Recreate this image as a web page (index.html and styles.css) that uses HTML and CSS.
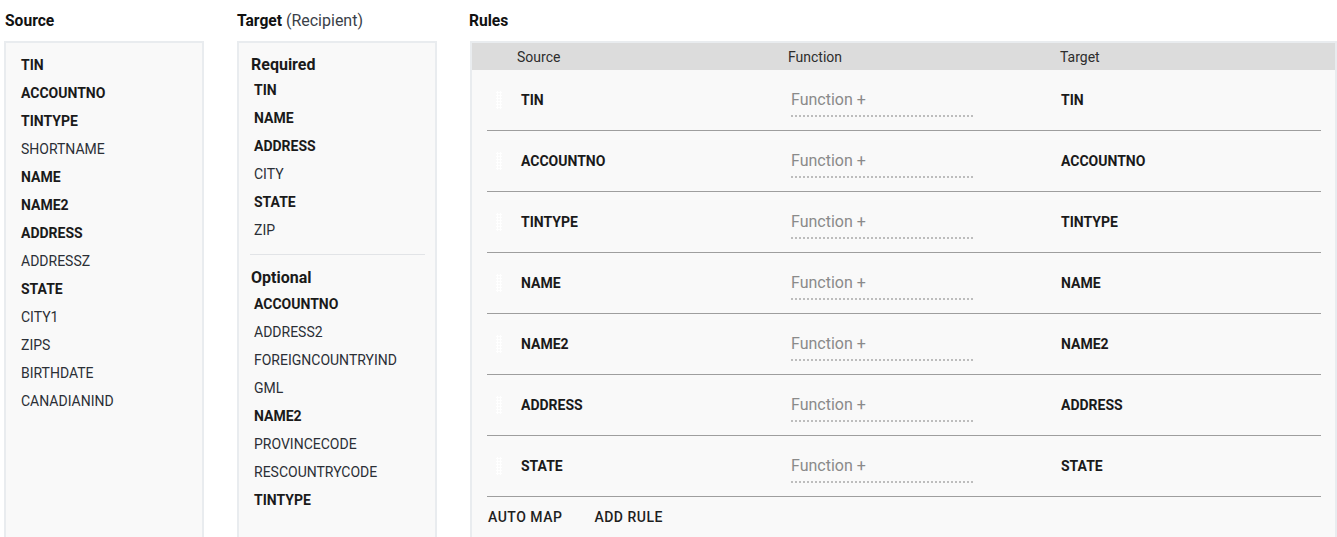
FILE: index.html
```html
<!DOCTYPE html>
<html lang="en">
<head>
<meta charset="utf-8">
<title>Mapping</title>
<link rel="stylesheet" href="styles.css">
</head>
<body>
<div class="page">
  <section class="col col-source">
    <h2 class="col-title">Source</h2>
    <div class="panel list-panel">
      <ul class="fields">
        <li class="b">TIN</li>
        <li class="b">ACCOUNTNO</li>
        <li class="b">TINTYPE</li>
        <li>SHORTNAME</li>
        <li class="b">NAME</li>
        <li class="b">NAME2</li>
        <li class="b">ADDRESS</li>
        <li>ADDRESSZ</li>
        <li class="b">STATE</li>
        <li>CITY1</li>
        <li>ZIPS</li>
        <li>BIRTHDATE</li>
        <li>CANADIANIND</li>
      </ul>
    </div>
  </section>

  <section class="col col-target">
    <h2 class="col-title">Target <span class="sub">(Recipient)</span></h2>
    <div class="panel target-panel">
      <h3 class="group-title">Required</h3>
      <ul class="fields fields-target">
        <li class="b">TIN</li>
        <li class="b">NAME</li>
        <li class="b">ADDRESS</li>
        <li>CITY</li>
        <li class="b">STATE</li>
        <li>ZIP</li>
      </ul>
      <hr class="group-sep">
      <h3 class="group-title group-title-2">Optional</h3>
      <ul class="fields fields-target">
        <li class="b">ACCOUNTNO</li>
        <li>ADDRESS2</li>
        <li>FOREIGNCOUNTRYIND</li>
        <li>GML</li>
        <li class="b">NAME2</li>
        <li>PROVINCECODE</li>
        <li>RESCOUNTRYCODE</li>
        <li class="b">TINTYPE</li>
      </ul>
    </div>
  </section>

  <section class="col col-rules">
    <h2 class="col-title">Rules</h2>
    <div class="panel rules-panel">
      <div class="rules-head">
        <span>Source</span>
        <span>Function</span>
        <span>Target</span>
      </div>
      <div class="rules-body">
        <div class="rule">
          <span class="handle"></span>
          <span class="r-src">TIN</span>
          <span class="r-fn"><span class="fn">Function +</span></span>
          <span class="r-tgt">TIN</span>
        </div>
        <div class="rule">
          <span class="handle"></span>
          <span class="r-src">ACCOUNTNO</span>
          <span class="r-fn"><span class="fn">Function +</span></span>
          <span class="r-tgt">ACCOUNTNO</span>
        </div>
        <div class="rule">
          <span class="handle"></span>
          <span class="r-src">TINTYPE</span>
          <span class="r-fn"><span class="fn">Function +</span></span>
          <span class="r-tgt">TINTYPE</span>
        </div>
        <div class="rule">
          <span class="handle"></span>
          <span class="r-src">NAME</span>
          <span class="r-fn"><span class="fn">Function +</span></span>
          <span class="r-tgt">NAME</span>
        </div>
        <div class="rule">
          <span class="handle"></span>
          <span class="r-src">NAME2</span>
          <span class="r-fn"><span class="fn">Function +</span></span>
          <span class="r-tgt">NAME2</span>
        </div>
        <div class="rule">
          <span class="handle"></span>
          <span class="r-src">ADDRESS</span>
          <span class="r-fn"><span class="fn">Function +</span></span>
          <span class="r-tgt">ADDRESS</span>
        </div>
        <div class="rule">
          <span class="handle"></span>
          <span class="r-src">STATE</span>
          <span class="r-fn"><span class="fn">Function +</span></span>
          <span class="r-tgt">STATE</span>
        </div>
        <div class="rules-actions">
          <button class="btn">AUTO MAP</button>
          <button class="btn">ADD RULE</button>
        </div>
      </div>
    </div>
  </section>
</div>
</body>
</html>
```

FILE: styles.css
```css
html, body {
  margin: 0;
  padding: 0;
  overflow: hidden;
  background: #fff;
}
body {
  font-family: Roboto, "Liberation Sans", Arial, sans-serif;
  color: #212121;
}
.page {
  display: flex;
  align-items: flex-start;
  padding: 11px 0 0 4px;
}
.col {
  display: flex;
  flex-direction: column;
}
.col-source { width: 200px; margin-right: 33px; }
.col-target { width: 200px; margin-right: 33px; }
.col-rules { flex: 1; }

.col-title {
  margin: 0 0 10px 1px;
  font-size: 15.6px;
  line-height: 20px;
  font-weight: 700;
  color: #111;
}
.col-target .col-title { margin-left: 0; }
.col-rules .col-title { margin-left: -1px; }
.col-title .sub {
  font-weight: 400;
  font-size: 16px;
  color: #3a3f48;
}

.panel {
  background: #f9f9f9;
  border: 2px solid #e9ecef;
  min-height: 520px;
  box-sizing: border-box;
}

.fields {
  list-style: none;
  margin: 0;
  padding: 7px 0 0 15px;
}
.fields li {
  font-size: 14px;
  line-height: 28px;
  height: 28px;
  color: #2b2f36;
  white-space: nowrap;
}
.list-panel .fields li { line-height: 30px; }
.fields li.b {
  font-weight: 700;
  color: #1a1a1a;
}

.target-panel {
  padding: 10px 10px 0 11px;
}
.group-title {
  margin: 0 0 0 1px;
  font-size: 16px;
  line-height: 23px;
  font-weight: 700;
  color: #1a1a1a;
}
.group-title-2 { margin-top: 11px; line-height: 24px; }
.fields-target {
  padding: 0 0 0 4px;
}
.group-sep {
  border: 0;
  border-top: 1px solid #e2e4e7;
  margin: 10px 0 0 0;
  height: 0;
}

.rules-head {
  display: grid;
  grid-template-columns: 271px 272px 1fr;
  padding-left: 45px;
  background: #dcdcdc;
  height: 27px;
  align-items: center;
  font-size: 14px;
  color: #2d2d2d;
}
.rules-body {
  margin: 0 14px 0 15px;
}
.rule {
  display: grid;
  grid-template-columns: 34px 270px 270px 1fr;
  align-items: center;
  height: 60px;
  border-bottom: 1px solid #9e9e9e;
}
.handle {
  justify-self: start;
  margin-left: 9px;
  width: 6px;
  height: 18px;
  background-image: radial-gradient(circle, #ffffff 1px, transparent 1.2px);
  background-size: 3px 3px;
}
.r-src, .r-tgt {
  font-size: 14px;
  font-weight: 700;
  color: #1a1a1a;
}
.r-fn { padding-top: 6px; }
.fn {
  display: inline-block;
  width: 182px;
  font-size: 16px;
  line-height: 20px;
  color: #8a8a8a;
  padding-bottom: 5px;
  border-bottom: 2px dotted #bdbdbd;
}
.rules-actions {
  display: flex;
  gap: 32px;
  padding-top: 12px;
  padding-left: 1px;
}
.btn {
  font-family: inherit;
  font-size: 14px;
  font-weight: 500;
  line-height: 16px;
  letter-spacing: 0.5px;
  color: #1f1f1f;
  background: none;
  border: 0;
  padding: 0;
  cursor: pointer;
}
```
